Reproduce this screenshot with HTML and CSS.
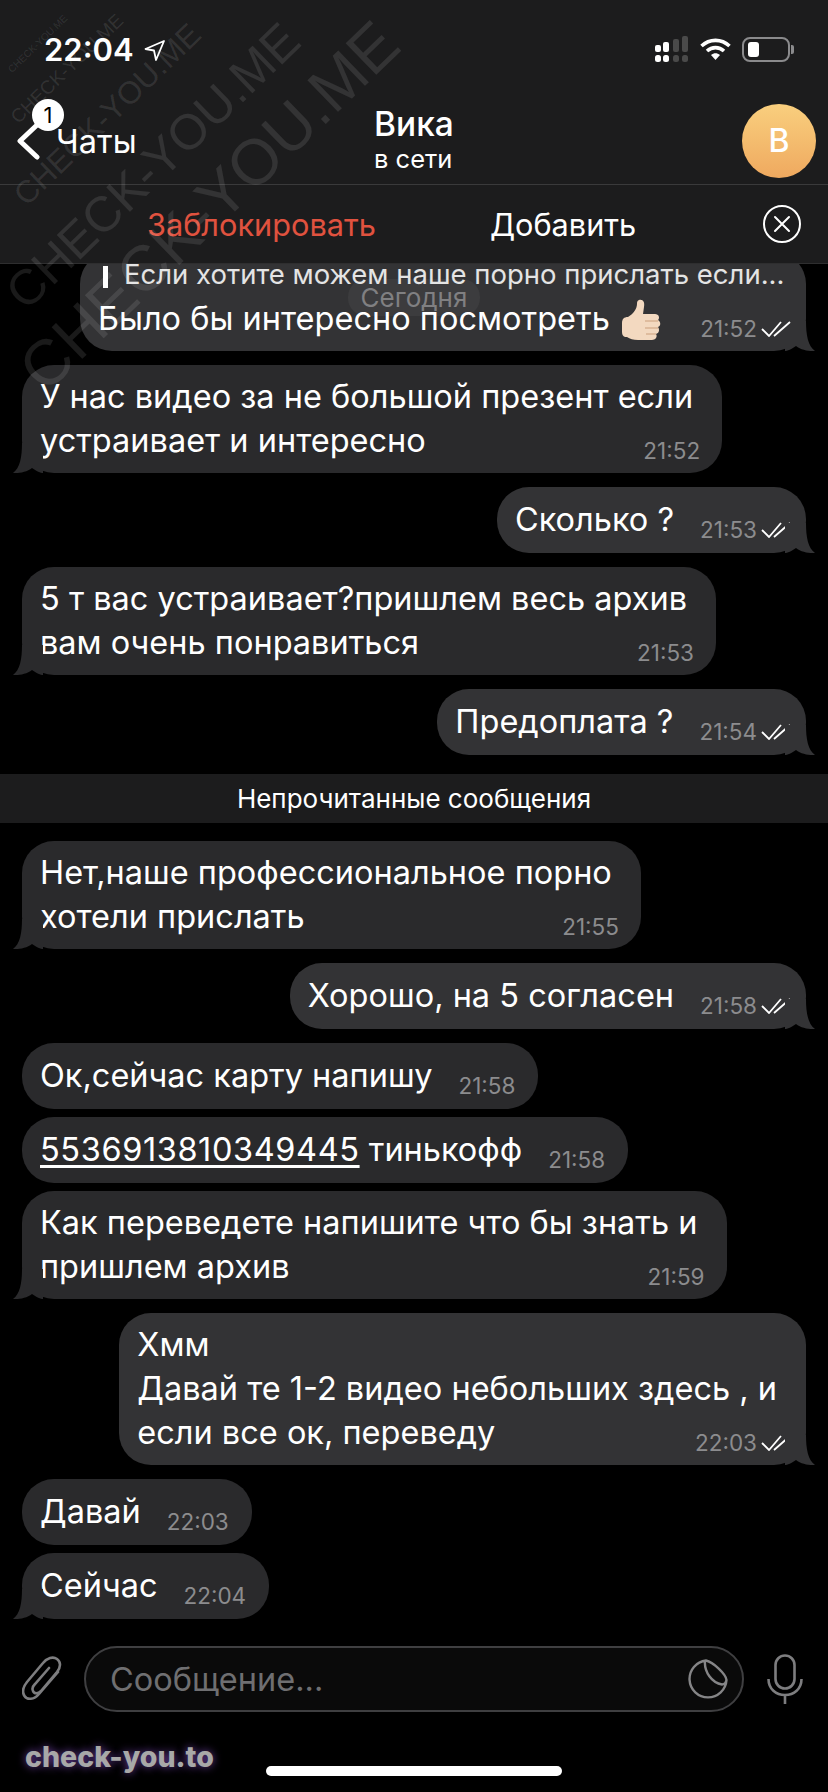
FILE: index.html
```html
<!DOCTYPE html>
<html lang="ru">
<head>
    <meta charset="UTF-8">
    <title>Вика</title>
    <link rel="stylesheet" href="styles.css">
</head>
<body>
  <div class="phone">
    <header class="header">
      <div class="status-bar">
        <div class="status-left">
          <span class="clock">22:04</span>
          <svg class="location" viewBox="0 0 21 21"><path d="M20 1 L1.500 9 L10 10.500 L12 20 Z" fill="none" stroke="#fff" stroke-width="1.800" stroke-linejoin="round"/></svg>
        </div>
        <div class="status-right">
          <svg class="signal" viewBox="0 0 34 26">
            <rect x="0" y="9" width="6" height="7" rx="2" fill="#fff"/>
            <rect x="8" y="6" width="6" height="10" rx="2" fill="#fff"/>
            <rect x="18" y="3" width="6" height="13" rx="2" fill="#4a4a4a"/>
            <rect x="27" y="0" width="6" height="16" rx="2" fill="#4a4a4a"/>
            <rect x="0" y="19" width="6" height="7" rx="2.5" fill="#fff"/>
            <rect x="8" y="19" width="6" height="7" rx="2.5" fill="#fff"/>
            <rect x="18" y="19" width="6" height="7" rx="2.5" fill="#4a4a4a"/>
            <rect x="27" y="19" width="6" height="7" rx="2.5" fill="#4a4a4a"/>
          </svg>
          <svg class="wifi" viewBox="0 0 32 24">
            <path d="M2 9 C10 1.500 22 1.500 30 9" fill="none" stroke="#fff" stroke-width="3.600"/>
            <path d="M7.500 14 C12.500 9.500 19.500 9.500 24.500 14" fill="none" stroke="#fff" stroke-width="3.600"/>
            <path d="M11.500 18 C14.500 15.500 17.500 15.500 20.500 18 L16 23 Z" fill="#fff"/>
          </svg>
          <div class="battery"><div class="battery-level"></div></div>
        </div>
      </div>

      <div class="nav-bar">
        <div class="back">
          <svg class="chevron" viewBox="0 0 26 38"><path d="M22 3 L5 19 L22 35" fill="none" stroke="#fff" stroke-width="5" stroke-linecap="round" stroke-linejoin="round"/></svg>
          <span class="back-label">Чаты</span>
          <span class="badge">1</span>
        </div>
        <div class="title">
          <div class="title-name">Вика</div>
          <div class="title-status">в сети</div>
        </div>
        <div class="avatar">В</div>
      </div>

      <div class="action-bar">
        <span class="action action-block">Заблокировать</span>
        <span class="action">Добавить</span>
        <svg class="action-close" viewBox="0 0 38 38">
          <circle cx="19" cy="19" r="18" fill="none" stroke="#fff" stroke-width="2"/>
          <path d="M12 12 L26 26 M26 12 L12 26" fill="none" stroke="#fff" stroke-width="2" stroke-linecap="round"/>
        </svg>
      </div>
    </header>

    <main class="messages">
      <div class="date-pill">Сегодня</div>

      <div class="bubble out tail first-bubble">
        <div class="reply">Если хотите можем наше порно прислать если...</div>
        <div class="bubble-row">
          <span class="text">Было бы интересно посмотреть</span>
          <svg class="thumb" viewBox="0 0 40 42">
            <path d="M17 1 C21 0 23 3 22 8 L21 15 L33 15 C37 15 38 19 36 21 C39 23 39 27 36 28 C38 31 37 34 34 35 C36 38 33 41 30 41 L16 41 C11 41 8 40 5 38 C1 38 0 36 0 32 L0 24 C0 20 2 18 6 18 C11 15 15 10 15 5 C15 3 15 2 17 1 Z" fill="#f3d9c0"/>
            <path d="M23 22 H36 M23 29 H36 M24 35 H34" stroke="#d9b293" stroke-width="1.600" fill="none"/>
          </svg>
          <span class="meta">21:52<svg class="checks" viewBox="0 0 30 16"><path d="M1 8 L8 15 L20 1 M13 15 L29 1" fill="none" stroke="#fff" stroke-width="1.800"/></svg></span>
        </div>
      </div>

      <div class="bubble in tail multi">
        <span class="text">У нас видео за не большой презент если<br>устраивает и интересно</span>
        <span class="meta">21:52</span>
      </div>

      <div class="bubble out tail">
        <span class="text">Сколько ?</span>
        <span class="meta">21:53<svg class="checks" viewBox="0 0 30 16"><path d="M1 8 L8 15 L20 1 M13 15 L29 1" fill="none" stroke="#fff" stroke-width="1.800"/></svg></span>
      </div>

      <div class="bubble in tail multi">
        <span class="text">5 т вас устраивает?пришлем весь архив<br>вам очень понравиться</span>
        <span class="meta">21:53</span>
      </div>

      <div class="bubble out tail">
        <span class="text">Предоплата ?</span>
        <span class="meta">21:54<svg class="checks" viewBox="0 0 30 16"><path d="M1 8 L8 15 L20 1 M13 15 L29 1" fill="none" stroke="#fff" stroke-width="1.800"/></svg></span>
      </div>

      <div class="unread">Непрочитанные сообщения</div>

      <div class="bubble in tail multi">
        <span class="text">Нет,наше профессиональное порно<br>хотели прислать</span>
        <span class="meta">21:55</span>
      </div>

      <div class="bubble out tail">
        <span class="text">Хорошо, на 5 согласен</span>
        <span class="meta">21:58<svg class="checks" viewBox="0 0 30 16"><path d="M1 8 L8 15 L20 1 M13 15 L29 1" fill="none" stroke="#fff" stroke-width="1.800"/></svg></span>
      </div>

      <div class="bubble in">
        <span class="text">Ок,сейчас карту напишу</span>
        <span class="meta">21:58</span>
      </div>

      <div class="bubble in close">
        <span class="text"><u>5536913810349445</u> тинькофф</span>
        <span class="meta">21:58</span>
      </div>

      <div class="bubble in tail multi close">
        <span class="text">Как переведете напишите что бы знать и<br>пришлем архив</span>
        <span class="meta">21:59</span>
      </div>

      <div class="bubble out tail multi">
        <span class="text">Хмм<br>Давай те 1-2 видео небольших здесь , и<br>если все ок, переведу</span>
        <span class="meta">22:03<svg class="checks" viewBox="0 0 30 16"><path d="M1 8 L8 15 L20 1 M13 15 L29 1" fill="none" stroke="#fff" stroke-width="1.800"/></svg></span>
      </div>

      <div class="bubble in">
        <span class="text">Давай</span>
        <span class="meta">22:03</span>
      </div>

      <div class="bubble in tail close">
        <span class="text">Сейчас</span>
        <span class="meta">22:04</span>
      </div>
    </main>

    <div class="input-bar">
      <svg class="clip" viewBox="0 0 40 48"><path d="M36 17 L17 39 C12 45 5 45 2.500 41 C0 37 1 32 5 27 L21 8 C25 3 31 1 35 4 C39 7 39 12 35 17 L19 36 C16 39 12 39 11 36 C10 34 11 31 13 29 L27 13" fill="none" stroke="#7d7d7f" stroke-width="2.600" stroke-linecap="round"/></svg>
      <div class="input">
        <span class="placeholder">Сообщение...</span>
        <svg class="sticker" viewBox="0 0 40 40"><path d="M18 1.500 A18.500 18.500 0 1 0 38.500 21 C38 15 25 3 18 1.500 Z M17 2 C16 13 24 24 34 25.500 C36 25.500 38 23.500 38.500 21" fill="none" stroke="#858587" stroke-width="2.400" stroke-linejoin="round"/></svg>
      </div>
      <svg class="mic" viewBox="0 0 36 50">
        <rect x="8.500" y="1.500" width="19" height="33" rx="9.500" fill="none" stroke="#7d7d7f" stroke-width="2.600"/>
        <path d="M1.500 25 C1.500 35 9 41 18 41 C27 41 34.500 35 34.500 25 M18 41 V50" fill="none" stroke="#7d7d7f" stroke-width="2.600"/>
      </svg>
    </div>

    <div class="bottom-bar">
      <span class="site-mark">check-you.to</span>
      <div class="home-indicator"></div>
    </div>

    <div class="watermarks">
      <span class="wm wm-1">CHECK-YOU.ME</span>
      <span class="wm wm-2">CHECK-YOU.ME</span>
      <span class="wm wm-3">CHECK-YOU.ME</span>
      <span class="wm wm-4">CHECK-YOU.ME</span>
      <span class="wm wm-5">CHECK-YOU.ME</span>
    </div>
  </div>
</body>
</html>
```

FILE: styles.css
```css
* {
    box-sizing: border-box;
}
body {
    margin: 0;
    background-color: #000;
    font-family: "Inter", "Noto Sans", sans-serif;
    color: #fff;
}
.phone {
    position: relative;
    width: 828px;
    height: 1792px;
    display: flex;
    flex-direction: column;
    overflow: hidden;
    background-color: #000;
}

/* header */
.header {
    flex: none;
    height: 264px;
    background-color: #1c1c1d;
    border-bottom: 1px solid #2e2e2f;
}
.status-bar {
    height: 94px;
    padding: 30px 38px 0 44px;
    display: flex;
    justify-content: space-between;
    align-items: flex-start;
}
.status-left {
    display: flex;
    align-items: center;
    gap: 10px;
}
.clock {
    font-size: 31px;
    font-weight: 600;
    line-height: 40px;
}
.location {
    width: 21px;
    height: 21px;
}
.status-right {
    display: flex;
    align-items: center;
    gap: 10px;
    padding-top: 6px;
}
.signal {
    width: 34px;
    height: 26px;
}
.wifi {
    width: 33px;
    height: 24px;
}
.battery {
    position: relative;
    width: 48px;
    height: 25px;
    border: 2px solid #8a8a8c;
    border-radius: 8px;
    padding: 3px 4px;
}
.battery::after {
    content: "";
    position: absolute;
    right: -6px;
    top: 6px;
    width: 3px;
    height: 9px;
    border-radius: 0 2px 2px 0;
    background-color: #8a8a8c;
}
.battery-level {
    width: 11px;
    height: 100%;
    border-radius: 3px;
    background-color: #fff;
}
.nav-bar {
    position: relative;
    height: 91px;
    display: flex;
    align-items: center;
    justify-content: space-between;
    padding: 0 12px 10px 15px;
    border-bottom: 1px solid #3a3a3b;
}
.back {
    position: relative;
    display: flex;
    align-items: center;
    gap: 15px;
    padding-top: 14px;
}
.chevron {
    width: 26px;
    height: 38px;
}
.back-label {
    font-size: 32.500px;
}
.badge {
    position: absolute;
    left: 17px;
    top: -9px;
    width: 32px;
    height: 32px;
    border-radius: 50%;
    background-color: #fff;
    color: #000;
    font-size: 22px;
    line-height: 32px;
    text-align: center;
}
.title {
    position: absolute;
    left: 374px;
    margin-top: 10px;
}
.title-name {
    font-size: 33.500px;
    font-weight: 500;
    line-height: 40px;
}
.title-status {
    font-size: 25.500px;
    line-height: 30px;
}
.avatar {
    width: 74px;
    height: 74px;
    margin-top: 14px;
    border-radius: 50%;
    background: linear-gradient(#f9cf7e, #efa95f);
    font-size: 32px;
    font-weight: 500;
    line-height: 74px;
    text-align: center;
}
.action-bar {
    height: 78px;
    display: flex;
    align-items: center;
    padding: 0 27px 0 147px;
    gap: 114px;
}
.action {
    font-size: 30.700px;
}
.action-block {
    color: #e0523f;
}
.action-close {
    width: 38px;
    height: 38px;
    margin-left: auto;
}

/* messages */
.messages {
    position: relative;
    flex: 1;
    min-height: 0;
    overflow: hidden;
    display: flex;
    flex-direction: column;
    justify-content: flex-end;
    align-items: flex-start;
    padding: 0 22px 17px;
    gap: 14px;
}
.bubble {
    position: relative;
    flex: none;
    display: flex;
    align-items: flex-end;
    gap: 26px;
    padding: 11px 23px 11px 18px;
    border-radius: 32px;
    background-color: #2a2a2c;
    font-size: 32.500px;
    line-height: 44px;
    z-index: 1;
}
.bubble.close {
    margin-top: -6px;
}
.bubble.out {
    align-self: flex-end;
    background-color: #333335;
    padding-right: 15px;
}
.bubble.tail::after {
    content: "";
    position: absolute;
    bottom: 0;
    width: 30px;
    height: 30px;
    background-color: inherit;
    clip-path: path("M21 0 C21 14 23 25 30 30 C24 30.500 16 29 11 25 C7 28 2 30 0 30 L0 0 Z");
}
.bubble.out.tail::after {
    right: -9px;
}
.bubble.in.tail::after {
    left: -9px;
    transform: scaleX(-1);
}
.bubble.multi {
    display: block;
    padding-top: 10px;
    padding-bottom: 10px;
    padding-right: 29px;
}
.bubble.multi .meta {
    position: absolute;
    right: 22px;
    bottom: 10px;
}
.bubble.out.multi .meta {
    right: 15px;
}
.text u {
    text-underline-offset: 4px;
    letter-spacing: 0.6px;
}
.meta {
    display: flex;
    align-items: center;
    gap: 4px;
    flex: none;
    font-size: 22.500px;
    line-height: 30px;
    color: #8c8c8e;
    margin-bottom: -3px;
}
.checks {
    width: 30px;
    height: 16px;
}
.first-bubble {
    display: block;
    width: 726px;
    padding: 0 15px 10px 18px;
    z-index: auto;
}
.bubble-row {
    position: relative;
    z-index: 3;
    display: flex;
    align-items: flex-end;
}
.reply {
    position: relative;
    z-index: 3;
    padding-left: 26px;
    font-size: 27.500px;
    line-height: 45px;
    white-space: nowrap;
    color: #e4e4e4;
}
.reply::before {
    content: "";
    position: absolute;
    left: 5px;
    top: 14px;
    width: 5px;
    height: 22px;
    background-color: #fff;
}
.thumb {
    width: 40px;
    height: 42px;
    margin-left: 12px;
}
.bubble-row .meta {
    margin-left: auto;
}
.date-pill {
    position: absolute;
    left: 348px;
    top: 15px;
    width: 132px;
    height: 37px;
    border-radius: 18px;
    background-color: #3c3c3e;
    color: #808082;
    font-size: 26px;
    line-height: 37px;
    text-align: center;
    z-index: 2;
}
.unread {
    flex: none;
    align-self: stretch;
    margin: 5px -22px 4px;
    height: 49px;
    background-color: #1c1c1d;
    font-size: 26px;
    line-height: 49px;
    text-align: center;
}

/* input */
.input-bar {
    flex: none;
    display: flex;
    align-items: center;
    height: 92px;
    padding: 7px 25px 13px 22px;
}
.clip {
    flex: none;
    width: 40px;
    height: 48px;
}
.input {
    flex: 1;
    height: 66px;
    margin: 0 23px 0 22px;
    padding: 0 14px 0 24px;
    display: flex;
    align-items: center;
    justify-content: space-between;
    border: 2px solid #3f3f41;
    border-radius: 33px;
    background-color: #0a0a0a;
}
.placeholder {
    font-size: 32.500px;
    color: #6f6f71;
}
.sticker {
    width: 40px;
    height: 40px;
}
.mic {
    flex: none;
    width: 36px;
    height: 50px;
}
.bottom-bar {
    position: relative;
    flex: none;
    height: 64px;
    display: flex;
    align-items: flex-start;
}
.site-mark {
    margin: 11px 0 0 25px;
    font-size: 28.500px;
    font-weight: 800;
    line-height: 36px;
    color: #a8a8a8;
    text-shadow: 0 0 8px #6b3fa0;
}
.home-indicator {
    position: absolute;
    left: 266px;
    top: 38px;
    width: 296px;
    height: 10px;
    border-radius: 5px;
    background-color: #fff;
}

/* watermark over the top corner */
.watermarks {
    position: absolute;
    left: 0;
    top: 0;
    width: 100%;
    height: 100%;
    pointer-events: none;
    z-index: 5;
}
.wm {
    position: absolute;
    font-family: "Liberation Sans", sans-serif;
    line-height: 1;
    color: rgba(255, 255, 255, 0.1);
    white-space: nowrap;
    transform: rotate(-44deg);
}
.wm-1 { left: -1px; top: 39px; font-size: 10px; }
.wm-2 { left: -7px; top: 59px; font-size: 19px; }
.wm-3 { left: -15px; top: 99px; font-size: 31.500px; }
.wm-4 { left: -40px; top: 141px; font-size: 49.500px; }
.wm-5 { left: -40px; top: 174px; font-size: 64px; }
```
